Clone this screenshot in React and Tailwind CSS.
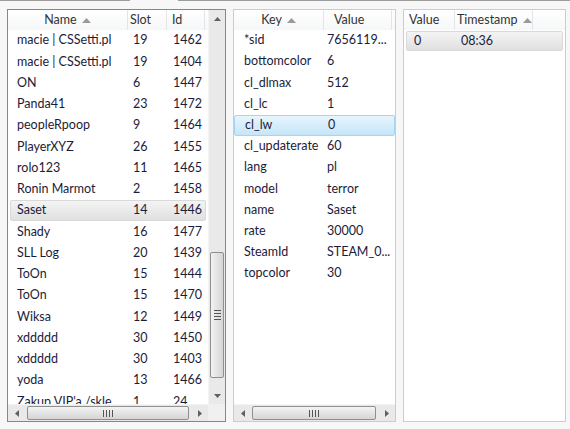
import React from 'react';

const players = [
  ['macie | CSSetti.pl', '19', '1462'],
  ['macie | CSSetti.pl', '19', '1404'],
  ['ON', '6', '1447'],
  ['Panda41', '23', '1472'],
  ['peopleRpoop', '9', '1464'],
  ['PlayerXYZ', '26', '1455'],
  ['rolo123', '11', '1465'],
  ['Ronin Marmot', '2', '1458'],
  ['Saset', '14', '1446'],
  ['Shady', '16', '1477'],
  ['SLL Log', '20', '1439'],
  ['ToOn', '15', '1444'],
  ['ToOn', '15', '1470'],
  ['Wiksa', '12', '1449'],
  ['xddddd', '30', '1450'],
  ['xddddd', '30', '1403'],
  ['yoda', '13', '1466'],
  ["Zakup VIP'a /skle...", '1', '24'],
];

const cvars = [
  ['*sid', '7656119...'],
  ['bottomcolor', '6'],
  ['cl_dlmax', '512'],
  ['cl_lc', '1'],
  ['cl_lw', '0'],
  ['cl_updaterate', '60'],
  ['lang', 'pl'],
  ['model', 'terror'],
  ['name', 'Saset'],
  ['rate', '30000'],
  ['SteamId', 'STEAM_0...'],
  ['topcolor', '30'],
];

const SortArrow = () => (
  <svg width="9" height="5" viewBox="0 0 9 5" className="ml-[5px] shrink-0">
    <path d="M0 5 L4.5 0 L9 5 Z" fill="#9a9a9a" />
  </svg>
);

const HeaderCell = ({ w, children, sort, center, pl = 'pl-[3px]' }) => (
  <div
    className={`${w} h-full flex items-center border-r border-[#e3e5e8] ${center ? 'justify-center' : pl} shrink-0`}
  >
    <span>{children}</span>
    {sort && <SortArrow />}
  </div>
);

// small scroll arrows
const Arrow = ({ dir }) => {
  const d = {
    up: 'M0 4 L3.5 0 L7 4 Z',
    down: 'M0 0 L3.5 4 L7 0 Z',
    left: 'M4 0 L0 3.5 L4 7 Z',
    right: 'M0 0 L4 3.5 L0 7 Z',
  }[dir];
  const vert = dir === 'up' || dir === 'down';
  return (
    <svg width={vert ? 7 : 4} height={vert ? 4 : 7} viewBox={vert ? '0 0 7 4' : '0 0 4 7'}>
      <path d={d} fill="#606060" />
    </svg>
  );
};

const VScroll = () => (
  <div className="w-[17px] h-full bg-[#e9e9e9] border-l border-[#f4f4f4] flex flex-col items-center">
    <div className="h-[17px] w-full flex items-center justify-center">
      <Arrow dir="up" />
    </div>
    <div className="flex-1 w-full relative">
      <div className="absolute left-[1px] right-[1px] top-[225px] h-[126px] rounded-[2px] border border-[#8e8f8f] bg-gradient-to-r from-[#f3f3f3] to-[#d5d5d5] flex items-center justify-center">
        <div className="flex flex-col gap-[2px]">
          <div className="w-[7px] h-px bg-[#555]" />
          <div className="w-[7px] h-px bg-[#555]" />
          <div className="w-[7px] h-px bg-[#555]" />
          <div className="w-[7px] h-px bg-[#555]" />
        </div>
      </div>
    </div>
    <div className="h-[17px] w-full flex items-center justify-center">
      <Arrow dir="down" />
    </div>
  </div>
);

const HScroll = ({ left, right }) => (
  <div className="flex-1 h-full bg-[#e9e9e9] border-t border-[#f4f4f4] flex items-center relative">
    <div className="w-[17px] h-full flex items-center justify-center">
      <Arrow dir="left" />
    </div>
    <div className="flex-1 h-full relative">
      <div
        className={`absolute top-[1px] bottom-[1px] ${left} ${right} rounded-[2px] border border-[#8e8f8f] bg-gradient-to-b from-[#f3f3f3] to-[#d5d5d5] flex items-center justify-center`}
      >
        <div className="flex gap-[2px]">
          <div className="w-px h-[7px] bg-[#555]" />
          <div className="w-px h-[7px] bg-[#555]" />
          <div className="w-px h-[7px] bg-[#555]" />
          <div className="w-px h-[7px] bg-[#555]" />
        </div>
      </div>
    </div>
    <div className="w-[17px] h-full flex items-center justify-center">
      <Arrow dir="right" />
    </div>
  </div>
);

const Header = ({ children }) => (
  <div className="h-[20px] flex bg-gradient-to-b from-white to-[#f6f7f8] text-[#333] shrink-0">
    {children}
    <div className="flex-1" />
  </div>
);

const rowSel = {
  gray: 'border border-[#d9d9d9] rounded-[2px] bg-gradient-to-b from-[#f4f4f4] to-[#e0e0e0]',
  blue: 'border border-[#a5d5f1] rounded-[2px] bg-gradient-to-b from-[#e7f5fd] to-[#c5e6f8]',
};

export default function App() {
  return (
    <div className="w-[570px] h-[429px] bg-[#f7f7f7] font-['Lato','Noto_Sans',sans-serif] text-[12.5px] text-[#1c1c3a] overflow-hidden">
      {/* tab strip edge */}
      <div className="h-px flex">
        <div className="w-[130px] bg-[#9c9c9c]" />
        <div className="w-[48px]" />
        <div className="flex-1 bg-[#9c9c9c]" />
      </div>

      <div className="flex gap-[7px] pl-[7px] pt-[8px]">
        {/* players */}
        <div className="w-[219px] h-[413px] border border-[#828790] bg-white flex flex-col">
          <div className="flex flex-1 min-h-0">
            <div className="flex-1 min-w-0 flex flex-col overflow-hidden">
              <Header>
                <HeaderCell w="w-[120px]" sort center>Name</HeaderCell>
                <HeaderCell w="w-[39px]" pl="pl-[2px]">Slot</HeaderCell>
                <HeaderCell w="w-[38px]" pl="pl-[5px]">Id</HeaderCell>
              </Header>
              <div className="flex-1 overflow-hidden">
                {players.map(([name, slot, id], i) => (
                  <div
                    key={i}
                    className={`h-[21.25px] flex items-center ${name === 'Saset' ? rowSel.gray + ' mx-[2px]' : ''}`}
                  >
                    <div className={`${name === 'Saset' ? 'w-[117px] pl-[6px]' : 'w-[120px] pl-[9px]'} whitespace-nowrap overflow-hidden`}>{name}</div>
                    <div className="w-[39px] pl-[5px]">{slot}</div>
                    <div className="w-[38px] pl-[6px]">{id}</div>
                  </div>
                ))}
              </div>
            </div>
            <VScroll />
          </div>
          <div className="h-[17px] flex shrink-0">
            <HScroll left="left-[2px]" right="right-[2px]" />
            <div className="w-[17px] bg-[#f0f0f0]" />
          </div>
        </div>

        {/* cvars */}
        <div className="w-[163px] h-[413px] border border-[#b4d3e6] bg-white flex flex-col">
          <div className="flex-1 min-h-0 flex flex-col overflow-hidden">
            <Header>
              <HeaderCell w="w-[90px]" sort center>Key</HeaderCell>
              <HeaderCell w="w-[68px]" pl="pl-[10px]">Value</HeaderCell>
            </Header>
            <div className="flex-1 overflow-hidden">
              {cvars.map(([k, v], i) => (
                <div
                  key={i}
                  className={`h-[21.2px] flex items-center ${k === 'cl_lw' ? rowSel.blue : ''}`}
                >
                  <div className="w-[90px] pl-[10px] whitespace-nowrap">{k}</div>
                  <div className="w-[68px] pl-[3px] whitespace-nowrap">{v}</div>
                </div>
              ))}
            </div>
          </div>
          <div className="h-[17px] flex shrink-0">
            <HScroll left="left-[1px]" right="right-[2px]" />
          </div>
        </div>

        {/* history */}
        <div className="w-[163px] h-[413px] border border-[#b4d3e6] bg-white flex flex-col">
          <Header>
            <HeaderCell w="w-[51px]" pl="pl-[5px]">Value</HeaderCell>
            <HeaderCell w="w-[78px]" sort pl="pl-[2px]">Timestamp</HeaderCell>
          </Header>
          <div className={`mx-[2px] mt-[1px] h-[20px] flex items-center ${rowSel.gray}`}>
            <div className="w-[49px] pl-[7px]">0</div>
            <div className="w-[78px] pl-[5px]">08:36</div>
          </div>
        </div>
      </div>
    </div>
  );
}
